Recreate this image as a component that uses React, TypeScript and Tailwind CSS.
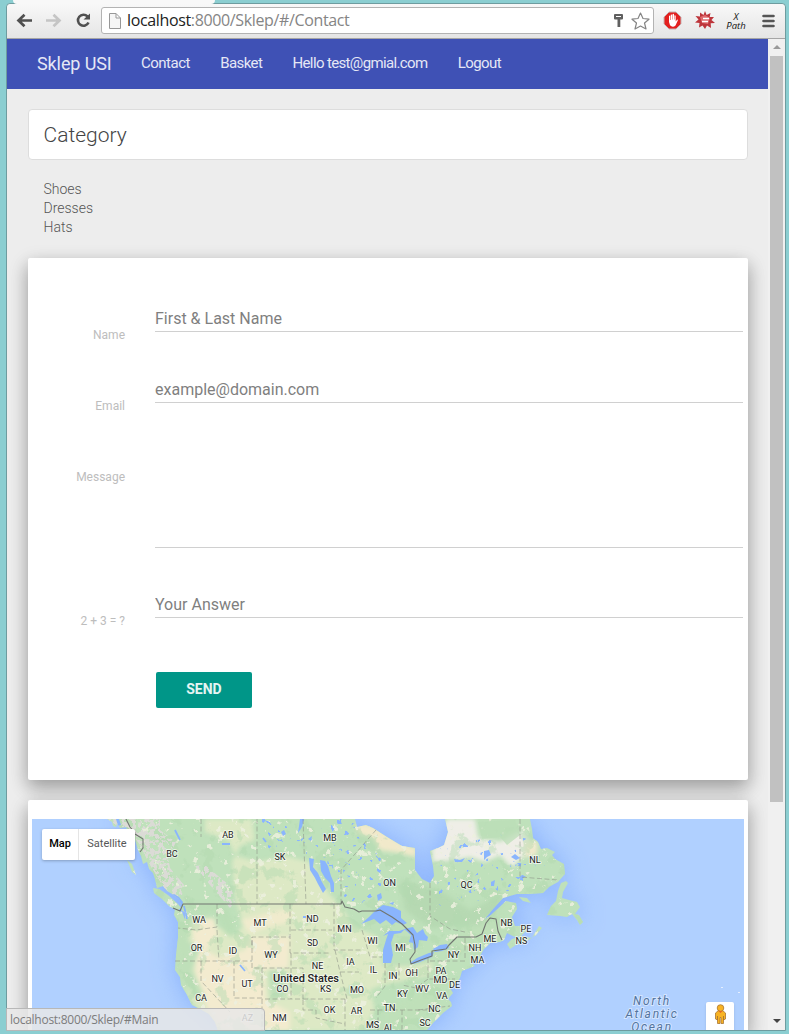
import React from "react";

type Label = [string, number, number];

const STATES: Label[] = [
  ["AB", 228, 838], ["BC", 172, 857], ["SK", 280, 860], ["MB", 330, 841], ["ON", 389.5, 886],
  ["QC", 466.5, 888], ["NL", 535, 863], ["WA", 199, 923], ["OR", 196.5, 951], ["ID", 233, 954],
  ["MT", 260, 926], ["ND", 312.5, 922], ["SD", 312.5, 946], ["MN", 344.5, 932], ["WI", 372.5, 944],
  ["MI", 400.5, 951], ["WY", 271, 958], ["NE", 317.5, 969], ["IA", 350.5, 965], ["IL", 373.5, 973],
  ["IN", 393, 979], ["OH", 411.5, 976], ["PA", 441, 974], ["NY", 453.5, 958], ["NH", 475, 951],
  ["ME", 490, 942], ["MA", 477.5, 963], ["NB", 506.5, 926], ["PE", 526, 932], ["NS", 521.5, 944],
  ["NV", 217.5, 982], ["UT", 247, 987], ["CA", 201, 1001], ["CO", 282.5, 992], ["KS", 325.5, 992],
  ["MO", 357, 993], ["KY", 402.5, 997], ["WV", 422, 992], ["MD", 440.5, 983], ["DE", 454.5, 988],
  ["VA", 442, 999], ["AZ", 247.5, 1021], ["NM", 279.5, 1021], ["OK", 329.5, 1013], ["AR", 356.5, 1014],
  ["TN", 389.5, 1011], ["NC", 434.5, 1012], ["SC", 425, 1026], ["MS", 372.5, 1028], ["AL", 389, 1031.5],
];

const LAND =
  "M107 819L112 822L113 826L116 827L117 823L120 828L126 827L129 833L135 840L138 850L141 856L143 864L147 862L149 869L153 873L155 879L157 888L163 886L167 891L172 894L179 899L181 905L182 911L186 912L185 920L182 912L175 909L174 915L178 922L178 938L176 955L175 970L180 977L181 985L187 995L192 1005L200 1009L209 1014L215 1022L218 1031L426 1031L434 1022L443 1013L452 1006L451 1002L448 999L453 993L450 988L454 985L451 981L456 984L460 978L462 971L475 966L471 962L478 960L484 964L480 956L484 949L490 943L500 942L504 940L507 933L515 937L521 936L527 930L526 925L519 926L515 926L512 917L517 909L516 903L506 901L491 915L484 920L492 910L503 898L517 894L530 894L543 893L549 887L558 882L565 874L564 864L555 859L552 855L555 852L547 848L541 849L538 842L533 838L532 829L530 819L445 819L448 832L444 845L438 848L430 851L433 866L434 876L430 883L422 879L415 870L415 848L402 846L387 837L373 828L366 825L357 827L355 819Z";

const ISLANDS = [
  "M153 888L159 889L168 895L178 904L181 908L177 911L169 906L162 899L154 893Z",
  "M127 860L132 864L136 875L132 872Z",
  "M561 883L566 881L568 883L563 892L562 898L569 900L577 902L580 907L575 914L579 915L583 922L580 925L577 920L572 914L567 917L560 916L547 915L551 906L556 901L558 891Z",
  "M507 944L512 939L521 936L532 938L539 926L542 928L536 935L525 942L516 945L510 949Z",
  "M519 897L527 898L531 903L523 901Z",
];

const LAKES = [
  "M361 924L369 917L377 909L383 905L393 907L401 911L401 918L407 923L403 925L396 922L392 925L386 920L380 924L374 919Z",
  "M383 963L383 950L386 940L388 934L383 936L389 931L399 931L405 929L401 933L394 934L391 943L393 955L391 963Z",
  "M404 929L413 927L417 933L423 929L425 934L428 937L427 941L419 940L418 947L414 950L413 943L409 942L411 935Z",
  "M410 963L417 958L429 953L434 952L432 957L420 962L413 964Z",
  "M433 949L440 945L447 944L449 948L442 951L435 952Z",
  "M320 860L325 861L328 866L331 876L334 883L334 892L331 892L330 883L325 878L321 871Z",
  "M309 858L314 859L313 867L318 873L322 882L326 889L323 893L318 884L315 878L310 870Z",
  "M377 895L381 893L382 898L378 901Z",
  "M300 819L304 819L302 827L298 833L299 826Z",
  "M174 894L179 897L183 902L182 907L177 901L171 896Z",
  "M116 819L119 819L121 825L118 826Z",
  "M281 832L284 830L286 834L283 836Z",
  "M345 852L349 850L348 853Z",
  "M308 839L312 836L311 841Z",
  "M484 851L489 850L491 855L487 857L484 860Z",
  "M511 857L515 854L520 858L516 860Z",
  "M491 882L495 880L494 886L491 886Z",
  "M454 859L460 860L465 858L462 862L455 862Z",
  "M389 903L394 902L393 905Z",
];

const PROVINCES =
  "M201 819V837M257 819V904M303 819L306 904M341 904V870L376 830M430 883L430 916L450 929L465 932M520 819V877L558 880M175 961H252M217 904V927L196 930L178 928M217 930L219 961M201 961V981L230 1012M234 961V998H262V968H252V937H290M252 945V937M262 968H303V999H262M290 904V953H331M291 930H332M291 953V999M303 999H345M262 999V1031M303 1000V1010H316V1018L345 1024M334 904V950H362M335 950L340 972H359M340 972L347 999M345 999V1031M362 930L370 957H382M385 963V986L376 998M399 963V980M428 958V979H455M430 961H466M428 979L416 988L402 985M370 1010H427M378 1010V1031M402 1010V1031M418 1010L450 1006M465 938V960";

const BORDER =
  "M126 819L130 827L135 833M135 834L143 839L143 848L140 852M173 908L180 911L183 904H341L342 901L345 907L354 909L359 912L362 911H376L380 910L392 917L402 924L408 930L413 935L415 945L415 952L410 959L411 964L421 960L432 956L432 951L446 949L449 945L457 937H476L482 934L486 923L490 918L496 919L498 931L502 940";

function RegionMap() {
  return (
    <svg className="block h-full w-full" viewBox="32 819 712 212" preserveAspectRatio="xMidYMin slice" colorInterpolationFilters="sRGB">
      <defs>
        <clipPath id="land">
          <path d={LAND} />
          {ISLANDS.map((d) => <path key={d} d={d} />)}
        </clipPath>
        <filter id="coast" x="-20%" y="-20%" width="140%" height="140%"><feGaussianBlur stdDeviation="13" /></filter>
        <filter id="soft" x="-20%" y="-20%" width="140%" height="140%"><feGaussianBlur stdDeviation="2.200" /></filter>
        <filter id="flecks" x="0" y="0" width="100%" height="100%">
          <feTurbulence type="fractalNoise" baseFrequency="0.12" numOctaves="4" seed="8" />
          <feColorMatrix values="0 0 0 0 .93  0 0 0 0 .94  0 0 0 0 .87  16 0 0 0 -10.6" />
        </filter>
        <filter id="groves" x="0" y="0" width="100%" height="100%">
          <feTurbulence type="fractalNoise" baseFrequency="0.06" numOctaves="5" seed="3" />
          <feColorMatrix values="0 0 0 0 .7  0 0 0 0 .85  0 0 0 0 .69  12 0 0 0 -6.9" />
        </filter>
        <filter id="peaks" x="0" y="0" width="100%" height="100%">
          <feTurbulence type="fractalNoise" baseFrequency="0.22" numOctaves="4" seed="12" result="n" />
          <feColorMatrix values="0 0 0 0 .86  0 0 0 0 .86  0 0 0 0 .84  14 0 0 0 -6.5" />
          <feComposite in2="SourceAlpha" operator="in" />
        </filter>
        <filter id="ponds" x="0" y="0" width="100%" height="100%">
          <feTurbulence type="fractalNoise" baseFrequency="0.16" numOctaves="3" seed="31" />
          <feColorMatrix values="0 0 0 0 .54  0 0 0 0 .71  0 0 0 0 1  22 0 0 0 -15.2" />
          <feComposite in2="SourceAlpha" operator="in" />
        </filter>
      </defs>
      <rect x="32" y="819" width="712" height="212" fill="#b0d0ff" />
      <g fill="#7fa9fb" filter="url(#coast)" opacity=".8">
        <path d={LAND} />
        {ISLANDS.map((d) => <path key={d} d={d} />)}
      </g>
      <g clipPath="url(#land)">
        <rect x="32" y="819" width="712" height="212" fill="#bfe1bb" />
        <g filter="url(#soft)">
          <path d="M205 819H252L255 840L240 846L232 862L236 900L243 925L236 935L225 930L190 918L190 935L184 950L180 972L190 1000L220 1031H362L375 1010L370 990L382 985L430 975L434 962L412 966L383 966L376 936L362 930L352 925L341 905L330 895L310 862L285 856L258 862L236 856L228 840L205 832Z" fill="#dde9c5" />
          <path d="M192 920L214 918L218 935L206 950L220 958L245 950L250 937L290 937L288 968L264 970L266 1000L290 1012L290 1031H220L208 1010L196 975Z" fill="#f3ebcf" />
          <path d="M240 920L290 908L292 922L265 928L250 934Z" fill="#f0ebcd" />
          <path d="M184 914L192 920L188 940L200 950L192 970L204 995L196 1000L178 975L175 930Z" fill="#bfe0b9" />
          <path d="M181 904H225L236 925L233 938L224 932L216 912L182 910Z" fill="#bbdeb6" />
          <path d="M268 970L284 970L286 998L270 998ZM385 1010L412 998L428 985L442 978L435 1000L410 1025L385 1031ZM470 925L500 915L500 935L480 945L450 955L448 945Z" fill="#bfe0b9" />
          <path d="M447 819H475L478 838L500 842L522 830L530 840L524 855L512 868L500 855L485 862L470 857L455 860L433 862L432 850Z" fill="#efeee7" />
          <path d="M525 840L538 842L537 855L524 857Z" fill="#f0e9cc" />
          <path d="M357 822L375 826L400 842L416 848V857L400 853L380 850L372 838L357 833Z" fill="#f1e9ca" />
          <path d="M400 880L440 890L470 910L500 895L505 900L480 925L430 928L405 910Z" fill="#b6d9b2" />
        </g>
        <rect x="32" y="819" width="712" height="212" filter="url(#groves)" opacity=".45" />
        <rect x="32" y="819" width="712" height="212" filter="url(#flecks)" opacity=".85" />
        <path d="M108 819H160L160 830L176 842L172 850L165 840L170 868L184 885L181 900L164 888L150 865L138 842ZM195 866L205 865L229 885L236 900L230 908L210 885Z" filter="url(#peaks)" />
        <path d="M262 819H350L372 842L400 870L400 900L345 904L335 880L300 856L262 850ZM435 850L520 830L550 870L500 895L440 910Z" filter="url(#ponds)" />
        <path d="M478 822L515 820L520 835L507 845L500 837L482 839Z" fill="#bbdeb7" opacity=".75" />
        <g fill="#8ab5fd">{LAKES.map((d) => <path key={d} d={d} />)}</g>
        <path d="M175 830L180 840M222 844H230M240 965L245 971M184 906L187 919M263 838L266 842M303 917H306" stroke="#8ab5fd" strokeWidth="1.8" fill="none" />
      </g>
      <path d={PROVINCES} fill="none" stroke="#8b9185" strokeWidth=".75" strokeDasharray="5 2.500" opacity=".75" />
      <path d={BORDER} fill="none" stroke="#707570" strokeWidth="1.1" strokeLinejoin="round" />
      <g fontFamily="Roboto, sans-serif" fontSize="9" textAnchor="middle" fill="#222" stroke="#fff" strokeOpacity=".65" strokeWidth="2" paintOrder="stroke" strokeLinejoin="round">
        {STATES.map(([name, x, y]) => <text key={name} x={x} y={y - 0.5}>{name}</text>)}
        <text x="306" y="982" fontSize="11" fontWeight="500">United States</text>
      </g>
      <g fontFamily="Roboto, sans-serif" fontSize="12" fontStyle="italic" letterSpacing="1.7" textAnchor="middle" fill="#53749e" stroke="#d4e5ff" strokeWidth="2" paintOrder="stroke">
        <text x="652" y="1005">North</text>
        <text x="652" y="1018">Atlantic</text>
        <text x="652" y="1031">Ocean</text>
      </g>
      <path d="M721 987.500h2M738 992.500h2" stroke="#e5efff" />
    </svg>
  );
}

function Toolbar() {
  return (
    <header className="flex h-[35px] shrink-0 items-start rounded-t border-b border-[#a5a5a5] bg-linear-to-b from-[#f8f8f8] to-[#e5e5e5] pt-[3px]">
      <svg className="ml-[9px] mt-1 h-5 w-[78px]" viewBox="0 0 78 20" fill="none">
        <path d="M16 9.500H3M8.500 3.800L2.500 9.500L8.500 15.200" stroke="#505050" strokeWidth="2.700" />
        <path d="M30 9.500H43M37.500 3.800L43.500 9.500L37.500 15.200" stroke="#c5c5c5" strokeWidth="2.700" />
        <path d="M71.500 5.500A5.500 5.500 0 1 0 72.500 11.500" stroke="#505050" strokeWidth="2.600" />
        <path d="M74 2.500V8.500H67.500Z" fill="#505050" />
      </svg>
      <div className="ml-[7px] flex h-[27px] w-[553px] items-center rounded-[3px] border border-[#b3b3b3] bg-white">
        <svg className="ml-[7px] h-4 w-3 shrink-0" viewBox="0 0 12 16" fill="#f6f6f6" stroke="#989898">
          <path d="M.5 .5H7L11.500 5V15.500H.5ZM7 .5V5H11.500" />
        </svg>
        <span className="-mt-0.5 ml-[6px] whitespace-nowrap font-['Open_Sans',sans-serif] text-[16px] leading-6 tracking-[-0.36px] text-[#858585]">
          <span className="text-[#222]">localhost</span>:8000/Sklep/#/Contact
        </span>
        <svg className="ml-auto mr-[3px] h-5 w-[37px]" viewBox="0 0 37 20">
          <path d="M2 3H9Q10 3 10 4V7.500Q10 8.500 9 8.500H7.300V16H4.500V8.500H2Q1 8.500 1 7.500V4Q1 3 2 3Z" fill="#606060" />
          <path d="M3 5.500H8" stroke="#fff" />
          <path d="M27.500 2L30 7.500L36 8.200L31.500 12L33 18L27.500 15L22 18L23.500 12L19 8.200L25 7.500Z" fill="white" stroke="#858585" strokeWidth="1.200" strokeLinejoin="round" />
        </svg>
      </div>
      <svg className="ml-[9px] mt-1 h-[19px] w-[52px]" viewBox="0 0 52 19">
        <path d="M6 1H13L18 6V13L13 18H6L1 13V6Z" fill="#e3201f" stroke="#c6b3b3" />
        <path d="M6 11V5Q6.500 4.200 7.200 5V9L7.700 9V3.800Q8.300 3 9.200 3.800V8.500H9.600V3.200Q10.200 2.500 11 3.200V8.500H11.400V4.500Q12 3.800 12.700 4.700V10.500L14 8.700Q15 8.200 14.800 9.500L12.500 14.500Q9.500 17 7 14.200Z" fill="white" />
        <path d="M42 0L43.600 4L47.500 2L46.700 6L51 6L48.500 9L52 12L47.700 12.200L48 17L44 14.500L42 18L39.500 14.500L36 16.500L36.500 12L32 11.500L35.500 8.500L32.500 5L37 5.500L37 1.500L40.500 4Z" fill="#bd353b" />
        <path d="M37 6L42 4L47 7L45 13L39 12Z" fill="#df6a6e" />
        <path d="M40 7.500H46M39 10.500H45" stroke="#fff" strokeWidth="1.300" />
      </svg>
      <div className="ml-[11px] mt-[5px] flex w-5 flex-col items-center font-['Open_Sans',sans-serif] text-[9.500px] font-medium italic text-[#111]"><span className="h-[9px] leading-[9px]">X</span><span className="h-[9px] leading-[9px]">Path</span></div>
      <svg className="ml-4 mt-[7px] h-[14px] w-[13px]" viewBox="0 0 13 14"><path d="M1.500 2H11.500M1.500 7H11.500M1.500 12H11.500" stroke="#555" strokeWidth="2.600" strokeLinecap="round" /></svg>
    </header>
  );
}

function Field({ label, placeholder }: { label: string; placeholder: string }) {
  return (
    <div className="flex h-[71px]">
      <label className="w-[97px] pt-[41px] text-right text-xs leading-[17px] text-[#bdbdbd]">{label}</label>
      <div className="ml-[30px] flex-1">
        <input className="mt-[9px] block h-[37px] w-full border-b border-[#d0d0d0] bg-transparent pt-[11px] text-base leading-6 outline-none placeholder:text-[#7f7f7f]" placeholder={placeholder} />
      </div>
    </div>
  );
}

function ContactCard() {
  return (
    <section className="mt-[21px] h-[522px] rounded-xs bg-white pr-[5px] pt-7 shadow-[0_8px_17px_rgba(0,0,0,0.2),0_6px_20px_rgba(0,0,0,0.19)]">
      <Field label="Name" placeholder="First &amp; Last Name" />
      <Field label="Email" placeholder="example@domain.com" />
      <div className="flex h-[144px]">
        <label className="w-[97px] pt-[41px] text-right text-xs leading-[17px] text-[#bdbdbd]">Message</label>
        <textarea className="ml-[30px] h-[120px] flex-1 resize-none border-b border-[#d0d0d0] outline-none" />
      </div>
      <Field label="2 + 3 = ?" placeholder="Your Answer" />
      <button className="ml-32 mt-[29px] h-9 w-24 rounded-xs bg-[#009688] pb-0.5 text-sm font-bold text-white/90">SEND</button>
    </section>
  );
}

function MapCard() {
  return (
    <section className="mt-5 flex h-[231px] shrink-0 flex-col rounded-t-xs bg-white px-1 pt-[19px] shadow-[0_8px_17px_rgba(0,0,0,0.2),0_6px_20px_rgba(0,0,0,0.19)]">
      <div className="relative min-h-0 flex-1">
        <RegionMap />
        <div className="absolute left-[10px] top-[10px] flex h-[31px] w-[93px] items-center rounded-xs bg-white text-[11px] shadow-[0_1px_3px_rgba(0,0,0,.25)]">
          <span className="flex h-full w-[37px] items-center justify-center border-r border-[#e5e5e5] font-medium text-black">Map</span>
          <span className="flex-1 text-center text-[#565656]">Satellite</span>
        </div>
        <div className="absolute bottom-px right-[10px] flex h-7 w-7 items-center justify-center rounded-t-xs bg-white shadow-sm">
          <svg className="mb-1 h-5 w-[13px]" viewBox="0 0 13 20" fill="#f8b323" stroke="#aa7634" strokeWidth=".8">
            <path d="M4.500 6.500H8.500L11.500 9V15L9.500 16V12V19.500H7V13.500H6V19.500H3.500V12V16L1.500 15V9Z" />
            <circle cx="6.500" cy="4" r="3.300" /><path d="M4.500 7L6.500 9L8.500 7Z" fill="#e66327" stroke="none" />
          </svg>
        </div>
      </div>
    </section>
  );
}

export default function App() {
  return (
    <div className="relative h-[1034px] w-[789px] overflow-hidden bg-[#8bced1] pl-[6px] pr-[3px] pt-[3px] font-[Roboto,sans-serif]">
      <div className="absolute left-[13px] top-0 h-[4px] w-[202px] rounded-b-sm bg-[#f8f8f8]" />
      <div className="flex h-[1028px] flex-col overflow-hidden rounded-t border border-[#6e9c9f] bg-[#ededed]">
        <Toolbar />
        <div className="flex min-h-0 flex-1">
          <main className="flex w-[761px] flex-col overflow-hidden bg-[#ededed]">
            <nav className="flex h-[50px] shrink-0 items-center gap-[30px] bg-[#3f51b5] pl-[30px] text-[15px] text-[#e5e7f5]">
              <span className="w-[75px] whitespace-nowrap pb-px text-[18px] tracking-[-0.1px]">Sklep USI</span>
              <div className="-ml-px flex gap-[30.300px] whitespace-nowrap pb-px tracking-[-0.6px]">
                <span className="tracking-[-0.5px]">Contact</span><span>Basket</span><span className="tracking-[-0.64px]">Hello test@gmial.com</span><span>Logout</span>
              </div>
            </nav>
            <div className="flex flex-col pl-[21px] pr-5 pt-5">
              <h1 className="flex h-[51px] items-center rounded-[4px] border border-[#dddddd] bg-white pl-[14.500px] pt-[2px] text-[21px] font-light text-[#444]">Category</h1>
              <ul className="mt-5 pl-[15.500px] text-sm font-light leading-[19px] text-[#555]"><li>Shoes</li><li>Dresses</li><li>Hats</li></ul>
              <ContactCard />
              <MapCard />
            </div>
          </main>
          <aside className="flex flex-1 flex-col items-center justify-between bg-[#f0f0f0] py-[6px]">
            <svg className="h-1 w-2" viewBox="0 0 8 4"><path d="M0 4L4 0L8 4Z" fill="#999" /></svg>
            <div className="mt-[7px] h-[746px] w-[13px] bg-[#c1c1c1]" />
            <svg className="mb-px mt-auto h-1 w-2" viewBox="0 0 8 4"><path d="M0 0H8L4 4Z" fill="#444" /></svg>
          </aside>
        </div>
      </div>
      <div className="absolute left-[6px] top-[1008px] flex h-[23px] w-[259px] items-center rounded-tr border border-[#b8b8b8] bg-[#e8e8e8]/85 pl-[3px] font-['Open_Sans',sans-serif] text-[12px] tracking-[-0.27px] text-[#7c7c7c]">localhost:8000/Sklep/#Main</div>
    </div>
  );
}
